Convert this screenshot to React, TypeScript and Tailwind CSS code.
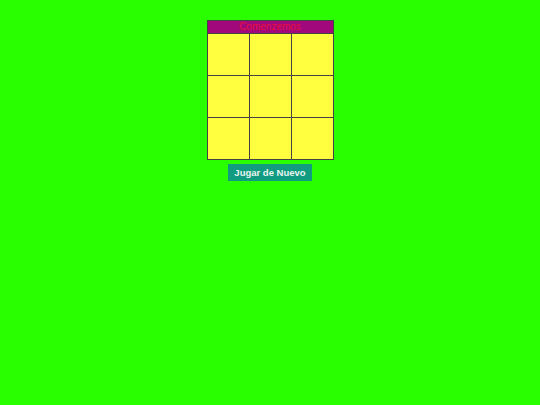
export default function App() {
  const cells = Array.from({ length: 9 });
  return (
    <div
      className="min-h-[405px] w-full bg-[#2aff00] flex flex-col items-center pt-[20px]"
      style={{ fontFamily: '"Liberation Sans", Arial, sans-serif' }}
    >
      <div className="w-[127px] border border-[#444]">
        <div className="h-[12px] bg-[#a0087c] text-[#e8103c] text-[10px] leading-[12px] text-center">
          Comenzemos
        </div>
        <div className="grid grid-cols-3 gap-px bg-[#444] border-t border-[#444]">
          {cells.map((_, i) => (
            <div key={i} className="h-[41px] bg-[#ffff40]" />
          ))}
        </div>
      </div>
      <button
        type="button"
        className="mt-[4px] w-[84px] h-[17px] bg-[#119b80] text-[#e8f4f0] font-bold text-[9.5px] leading-[17px]"
      >
        Jugar de Nuevo
      </button>
    </div>
  );
}
